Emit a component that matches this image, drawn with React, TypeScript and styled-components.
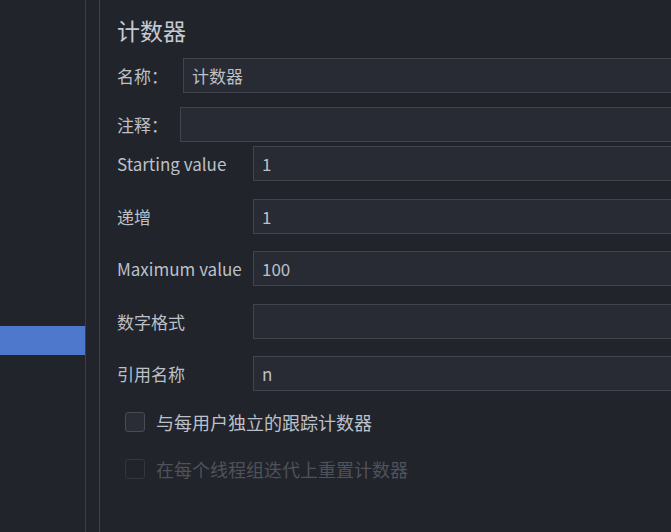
import React, { FC } from 'react';
import styled, { createGlobalStyle } from 'styled-components';

const GlobalStyle = createGlobalStyle`
  html, body {
    margin: 0;
    padding: 0;
    background: #21242b;
  }
  body {
    font-family: "Noto Sans CJK SC", "Noto Sans", sans-serif;
  }
`;

const Page = styled.div`
  display: flex;
  width: 671px;
  height: 532px;
  overflow: hidden;
  background: #21242b;
  color: #bcc0c8;
`;

const Tree = styled.div`
  flex-shrink: 0;
  width: 85px;
  border-right: 1px solid #3b3e46;
  display: flex;
  flex-direction: column;
  padding-top: 326px;
`;

const TreeRow = styled.div<{ selected?: boolean }>`
  height: 29px;
  background: ${(props) => (props.selected ? '#4d78cc' : 'transparent')};
`;

const Splitter = styled.div`
  flex-shrink: 0;
  width: 13px;
  border-right: 1px solid #3f424a;
`;

const Panel = styled.div`
  flex: 1;
  min-width: 0;
  padding: 13px 0 0 17px;
  display: flex;
  flex-direction: column;
`;

const Title = styled.div`
  font-size: 23px;
  line-height: 34px;
  color: #c6cad2;
  margin-bottom: 11px;
`;

const Row = styled.div<{ labelWidth: number; gap: number }>`
  display: grid;
  grid-template-columns: ${(props) => props.labelWidth}px 1fr;
  align-items: center;
  margin-bottom: ${(props) => props.gap}px;
`;

const Label = styled.div`
  font-size: 17px;
  line-height: 24px;
  white-space: nowrap;
`;

const Field = styled.div`
  height: 35px;
  box-sizing: border-box;
  border: 1px solid #41444c;
  background: #282b33;
  margin-right: -40px;
  padding-left: 8px;
  display: flex;
  align-items: center;
  font-size: 17px;
  color: #bcc0c8;
  white-space: nowrap;
`;

const Checks = styled.div`
  display: flex;
  flex-direction: column;
  gap: 25px;
  margin-top: 20px;
`;

const Check = styled.label<{ disabled?: boolean }>`
  display: flex;
  align-items: center;
  gap: 11px;
  padding-left: 8px;
  height: 22px;
  font-size: 18px;
  color: ${(props) => (props.disabled ? '#4f525a' : '#bcc0c8')};
`;

const Box = styled.span<{ disabled?: boolean }>`
  width: 20px;
  height: 20px;
  box-sizing: border-box;
  border-radius: 3px;
  border: 1px solid ${(props) => (props.disabled ? '#34373f' : '#494c54')};
  background: ${(props) => (props.disabled ? '#21242b' : '#2a2d35')};
  flex-shrink: 0;
`;

const FormRow: FC<{ label: string; value?: string; labelWidth: number; gap: number }> = ({
  label,
  value,
  labelWidth,
  gap,
}) => (
  <Row labelWidth={labelWidth} gap={gap}>
    <Label>{label}</Label>
    <Field>{value}</Field>
  </Row>
);

const fields = [
  { label: 'Starting value', value: '1', gap: 18 },
  { label: '递增', value: '1', gap: 17 },
  { label: 'Maximum value', value: '100', gap: 18 },
  { label: '数字格式', value: '', gap: 17 },
  { label: '引用名称', value: 'n', gap: 0 },
];

export default function App() {
  return (
    <Page>
      <GlobalStyle />
      <Tree>
        <TreeRow selected />
      </Tree>
      <Splitter />
      <Panel>
        <Title>计数器</Title>
        <FormRow label="名称：" value="计数器" labelWidth={66} gap={14} />
        <FormRow label="注释：" labelWidth={63} gap={4} />
        {fields.map((f) => (
          <FormRow key={f.label} label={f.label} value={f.value} labelWidth={136} gap={f.gap} />
        ))}
        <Checks>
          <Check>
            <Box />
            与每用户独立的跟踪计数器
          </Check>
          <Check disabled>
            <Box disabled />
            在每个线程组迭代上重置计数器
          </Check>
        </Checks>
      </Panel>
    </Page>
  );
}
